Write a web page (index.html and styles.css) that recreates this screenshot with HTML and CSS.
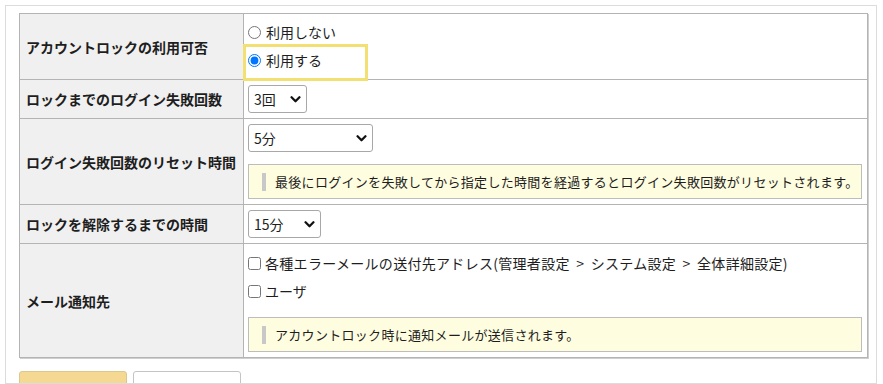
FILE: index.html
```html
<!DOCTYPE html>
<html lang="ja">
<head>
<meta charset="utf-8">
<link rel="stylesheet" href="styles.css">
</head>
<body>
<div class="panel">
  <table class="form">
    <tr>
      <th>アカウントロックの利用可否</th>
      <td>
        <div class="opts">
          <label class="opt"><input type="radio" name="use">利用しない</label>
          <label class="opt"><input type="radio" name="use" checked>利用する</label>
          <span class="highlight"></span>
        </div>
      </td>
    </tr>
    <tr>
      <th>ロックまでのログイン失敗回数</th>
      <td>
        <span class="sel w58"><select><option>3回</option></select><svg class="chev" viewBox="0 0 12 8" width="11" height="7"><path d="M1.5 1.5 L6 6 L10.5 1.5" fill="none" stroke="#111" stroke-width="2.6" stroke-linecap="round" stroke-linejoin="round"/></svg></span>
      </td>
    </tr>
    <tr>
      <th>ログイン失敗回数のリセット時間</th>
      <td>
        <span class="sel w125"><select><option>5分</option></select><svg class="chev" viewBox="0 0 12 8" width="11" height="7"><path d="M1.5 1.5 L6 6 L10.5 1.5" fill="none" stroke="#111" stroke-width="2.6" stroke-linecap="round" stroke-linejoin="round"/></svg></span>
        <div class="help"><span class="bar"></span>最後にログインを失敗してから指定した時間を経過するとログイン失敗回数がリセットされます。</div>
      </td>
    </tr>
    <tr>
      <th>ロックを解除するまでの時間</th>
      <td>
        <span class="sel w73"><select><option>15分</option></select><svg class="chev" viewBox="0 0 12 8" width="11" height="7"><path d="M1.5 1.5 L6 6 L10.5 1.5" fill="none" stroke="#111" stroke-width="2.6" stroke-linecap="round" stroke-linejoin="round"/></svg></span>
      </td>
    </tr>
    <tr>
      <th>メール通知先</th>
      <td>
        <label class="opt wide"><input type="checkbox">各種エラーメールの送付先アドレス(管理者設定 &gt; システム設定 &gt; 全体詳細設定)</label>
        <label class="opt"><input type="checkbox">ユーザ</label>
        <div class="help"><span class="bar"></span>アカウントロック時に通知メールが送信されます。</div>
      </td>
    </tr>
  </table>
  <div class="buttons">
    <button class="btn primary"></button>
    <button class="btn"></button>
  </div>
</div>
</body>
</html>
```
FILE: styles.css
```css
html, body {
  margin: 0;
  padding: 0;
  background: #fff;
}
body {
  font-family: "Noto Sans CJK JP", "Noto Sans", sans-serif;
  color: #1e1e1e;
  font-size: 14px;
}
.panel {
  margin: 5px 6px 0 5px;
  height: 370px;
  border: 1px solid #dcdcdc;
  padding: 7px 8px 0 13px;
  overflow: hidden;
  box-sizing: content-box;
}
.form {
  width: 849px;
  border-collapse: collapse;
  border: 1px solid #b0b0b0;
  box-shadow: 1px 1px 0 #cfcfcf;
}
.form th, .form td {
  border: 1px solid #b4b4b4;
  vertical-align: middle;
}
.form th {
  width: 211px;
  background: #f0f0f0;
  text-align: left;
  font-weight: bold;
  font-size: 14px;
  padding: 0 6px;
  line-height: 20px;
}
.form td {
  padding: 5px 5px 5px 4px;
  background: #fff;
}
.opts {
  position: relative;
  padding: 0;
  margin: -1px 0 0;
}
.opt {
  display: flex;
  align-items: center;
  height: 28px;
  line-height: 28px;
  font-size: 14px;
  white-space: nowrap;
}
.opt.wide {
  letter-spacing: 0.3px;
  word-spacing: 3px;
}
.opt input[type="radio"] {
  width: 13px;
  height: 13px;
  margin: 0 5px 0 0;
}
.opt input[type="checkbox"] {
  width: 13px;
  height: 13px;
  margin: 0 4px 0 0;
}
.highlight {
  position: absolute;
  left: -5px;
  top: 26px;
  width: 125px;
  height: 37px;
  box-sizing: border-box;
  border: 3px solid #f3e072;
  pointer-events: none;
}
.sel {
  position: relative;
  display: inline-block;
  vertical-align: top;
}
.sel select {
  appearance: none;
  -webkit-appearance: none;
  height: 28px;
  border: 1px solid #a8a8a8;
  border-radius: 3px;
  background: #fff;
  font-family: "Noto Sans CJK JP", "Noto Sans", sans-serif;
  font-size: 14px;
  color: #1e1e1e;
  padding: 0 0 0 5px;
  margin: 0;
  display: block;
}
.w58 select { width: 59px; }
.w125 select { width: 125px; }
.w73 select { width: 73px; }
.chev {
  position: absolute;
  right: 6px;
  top: 11px;
  pointer-events: none;
}
.help {
  margin-top: 12px;
  height: 35px;
  box-sizing: border-box;
  border: 1px solid #bdbdbd;
  background: #fffde0;
  display: flex;
  align-items: center;
  padding-left: 13px;
  font-size: 13px;
  letter-spacing: 0.3px;
  white-space: nowrap;
}
.help .bar {
  display: inline-block;
  width: 4px;
  height: 18px;
  background: #c8c8c8;
  margin-right: 9px;
  flex: none;
}
.buttons {
  display: flex;
  gap: 6px;
  margin-top: 13px;
}
.btn {
  width: 108px;
  height: 30px;
  border: 1px solid #c4c4c4;
  border-radius: 3px;
  background: #fff;
  padding: 0;
}
.btn.primary {
  background: #f5d891;
  border-color: #dcc88f;
}
```
